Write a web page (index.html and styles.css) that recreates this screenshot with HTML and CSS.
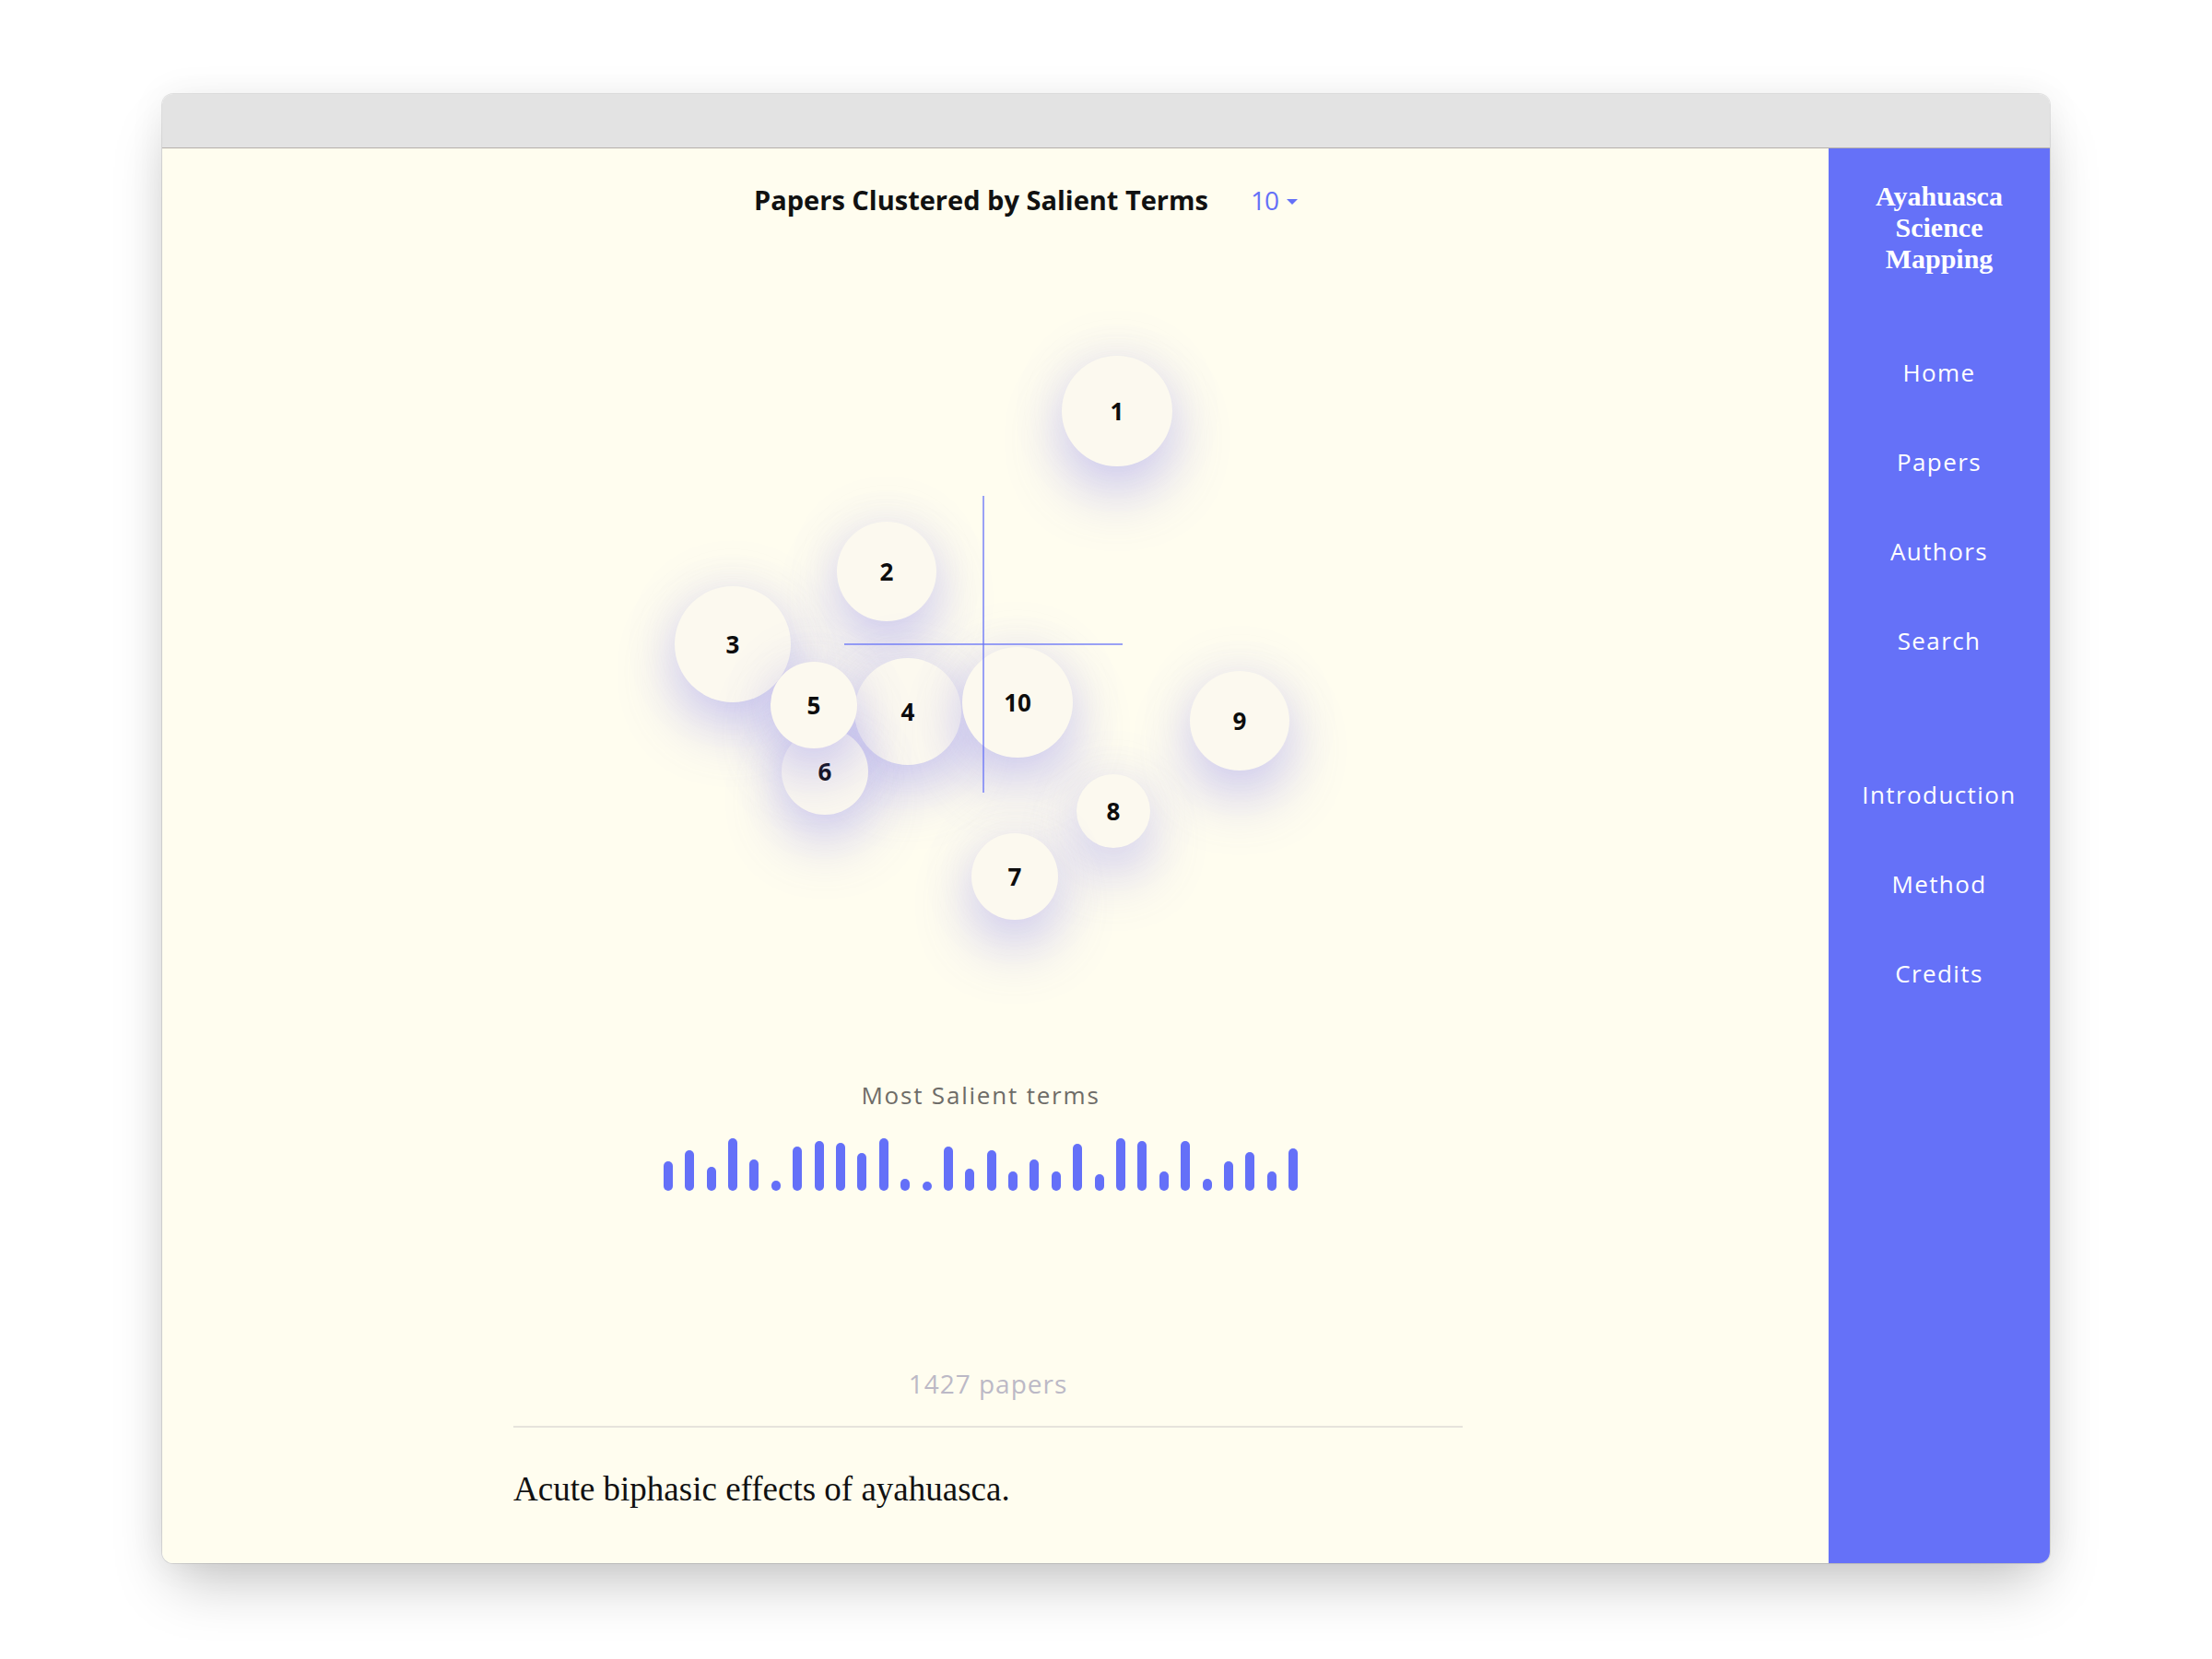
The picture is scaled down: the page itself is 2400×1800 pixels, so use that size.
FILE: index.html
```html
<!DOCTYPE html>
<html lang="en">
<head>
<meta charset="utf-8">
<title>Ayahuasca Science Mapping</title>
<link rel="stylesheet" href="styles.css">
</head>
<body>
<div class="window">
  <div class="titlebar"></div>
  <div class="app">
    <main class="main">
      <header class="header">
        <h1 class="title">Papers Clustered by Salient Terms</h1>
        <div class="select">10<span class="caret"></span></div>
      </header>
      <div class="chart">
        <div class="bubble" style="left:976px;top:149px;width:120px;height:120px">1</div>
        <div class="bubble" style="left:732px;top:329px;width:108px;height:108px">2</div>
        <div class="bubble" style="left:556px;top:399px;width:126px;height:126px">3</div>
        <div class="bubble" style="left:751px;top:477px;width:116px;height:116px">4</div>
        <div class="bubble" style="left:672px;top:553px;width:94px;height:94px">6</div>
        <div class="bubble" style="left:660px;top:481px;width:94px;height:94px">5</div>
        <div class="bubble" style="left:868px;top:465px;width:120px;height:120px">10</div>
        <div class="bubble" style="left:1115px;top:491px;width:108px;height:108px">9</div>
        <div class="bubble" style="left:992px;top:603px;width:80px;height:80px">8</div>
        <div class="bubble" style="left:878px;top:667px;width:94px;height:94px">7</div>
        <div class="axis axis-v"></div>
        <div class="axis axis-h"></div>
      </div>
      <div class="terms-label">Most Salient terms</div>
      <div class="bars">
        <span class="bar" style="height:32px"></span>
        <span class="bar" style="height:44px"></span>
        <span class="bar" style="height:26px"></span>
        <span class="bar" style="height:57px"></span>
        <span class="bar" style="height:34px"></span>
        <span class="bar" style="height:11px"></span>
        <span class="bar" style="height:48px"></span>
        <span class="bar" style="height:54px"></span>
        <span class="bar" style="height:52px"></span>
        <span class="bar" style="height:41px"></span>
        <span class="bar" style="height:57px"></span>
        <span class="bar" style="height:13px"></span>
        <span class="bar" style="height:10px"></span>
        <span class="bar" style="height:48px"></span>
        <span class="bar" style="height:24px"></span>
        <span class="bar" style="height:44px"></span>
        <span class="bar" style="height:21px"></span>
        <span class="bar" style="height:34px"></span>
        <span class="bar" style="height:21px"></span>
        <span class="bar" style="height:51px"></span>
        <span class="bar" style="height:18px"></span>
        <span class="bar" style="height:57px"></span>
        <span class="bar" style="height:54px"></span>
        <span class="bar" style="height:21px"></span>
        <span class="bar" style="height:54px"></span>
        <span class="bar" style="height:13px"></span>
        <span class="bar" style="height:32px"></span>
        <span class="bar" style="height:42px"></span>
        <span class="bar" style="height:21px"></span>
        <span class="bar" style="height:46px"></span>
      </div>
      <div class="count">1427 papers</div>
      <section class="papers">
        <hr class="divider">
        <p class="paper-title">Acute biphasic effects of ayahuasca.</p>
      </section>
    </main>
    <nav class="sidebar">
      <div class="brand">Ayahuasca Science Mapping</div>
      <ul class="nav">
        <li><a href="#">Home</a></li>
        <li><a href="#">Papers</a></li>
        <li><a href="#">Authors</a></li>
        <li><a href="#">Search</a></li>
      </ul>
      <ul class="nav nav-secondary">
        <li><a href="#">Introduction</a></li>
        <li><a href="#">Method</a></li>
        <li><a href="#">Credits</a></li>
      </ul>
    </nav>
  </div>
</div>
</body>
</html>
```

FILE: styles.css
```css
html, body {
  margin: 0;
  padding: 0;
}

body {
  width: 2400px;
  height: 1800px;
  background: #ffffff;
  font-family: "Open Sans", "Noto Sans", sans-serif;
  overflow: hidden;
}

.window {
  margin: 102px 0 0 176px;
  width: 2048px;
  height: 1594px;
  border-radius: 12px;
  overflow: hidden;
  display: flex;
  flex-direction: column;
  box-shadow: 0 0 0 1px rgba(0, 0, 0, 0.10),
              0 32px 60px -12px rgba(0, 0, 0, 0.22),
              0 0 40px rgba(0, 0, 0, 0.06);
}

.titlebar {
  flex: none;
  height: 58px;
  background: #e3e3e3;
  border-bottom: 1px solid #b4afab;
}

.app {
  flex: 1;
  display: flex;
  min-height: 0;
}

.main {
  flex: 1;
  background: #fffdef;
  display: flex;
  flex-direction: column;
  align-items: center;
  padding-right: 32px;
}

.header {
  display: flex;
  align-items: center;
  padding-top: 36px;
  height: 40px;
}

.title {
  margin: 0;
  font-size: 29px;
  line-height: 40px;
  font-weight: 700;
  color: #111111;
}

.select {
  display: flex;
  align-items: center;
  margin-left: 46px;
  margin-right: -98px;
  font-size: 28px;
  line-height: 40px;
  font-weight: 500;
  color: #6470f8;
  letter-spacing: -1px;
}

.caret {
  display: block;
  width: 0;
  height: 0;
  margin-left: 9px;
  margin-top: 4px;
  border-left: 6px solid transparent;
  border-right: 6px solid transparent;
  border-top: 6px solid #6470f8;
}

.chart {
  position: relative;
  align-self: stretch;
  height: 934px;
  flex: none;
}

.bubble {
  position: absolute;
  border-radius: 50%;
  background: #fcf9ef;
  display: flex;
  align-items: center;
  justify-content: center;
  font-size: 26px;
  font-weight: 700;
  color: #0d0d0d;
  box-shadow: 0 30px 64px rgba(104, 96, 240, 0.30),
              0 0 60px rgba(120, 112, 240, 0.14);
}

.axis {
  position: absolute;
  background: rgba(100, 112, 248, 0.65);
}

.axis-v {
  left: 890px;
  top: 301px;
  width: 2px;
  height: 322px;
}

.axis-h {
  left: 740px;
  top: 461px;
  width: 302px;
  height: 2px;
}

.terms-label {
  font-size: 26px;
  line-height: 34px;
  letter-spacing: 1.8px;
  color: #6e6c68;
}

.bars {
  display: flex;
  align-items: flex-end;
  gap: 13.4px;
  height: 57px;
  margin-top: 30px;
}

.bar {
  display: block;
  width: 10px;
  border-radius: 5px;
  background: #6470f8;
}

.count {
  margin-top: 190px;
  margin-left: 16px;
  font-size: 28px;
  line-height: 38px;
  letter-spacing: 1px;
  color: #bcb9c6;
}

.papers {
  align-self: flex-start;
  width: 1030px;
  margin-left: 381px;
}

.divider {
  margin: 27px 0 0 0;
  height: 2px;
  border: none;
  background: #e6e3dc;
}

.paper-title {
  margin: 43px 0 0 0;
  font-family: "Liberation Serif", "Times New Roman", serif;
  font-size: 37px;
  line-height: 48px;
  color: #111111;
}

.sidebar {
  flex: none;
  width: 240px;
  background: #6571f8;
  display: flex;
  flex-direction: column;
  align-items: center;
  padding-top: 35px;
}

.brand {
  max-width: 170px;
  text-align: center;
  font-family: "Liberation Serif", "Times New Roman", serif;
  font-weight: 700;
  font-size: 30px;
  line-height: 34px;
  color: #ffffff;
}

.nav {
  list-style: none;
  margin: 58px 0 0 0;
  padding: 0;
  text-align: center;
}

.nav-secondary {
  margin-top: 70px;
}

.nav li {
  height: 97px;
  line-height: 97px;
}

.nav a {
  color: #ffffff;
  text-decoration: none;
  font-size: 26px;
  font-weight: 500;
  letter-spacing: 1.4px;
}
```
